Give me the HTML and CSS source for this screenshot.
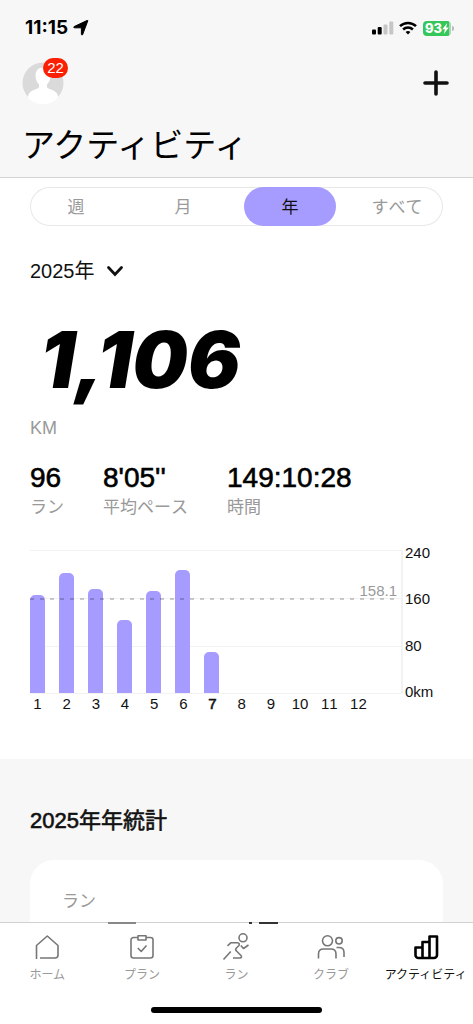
FILE: index.html
```html
<!DOCTYPE html>
<html lang="ja">
<head>
<meta charset="utf-8">
<meta name="viewport" content="width=device-width, initial-scale=1">
<title>アクティビティ</title>
<link rel="stylesheet" href="styles.css">
</head>
<body>
<div class="app">
  <header class="header">
    <div class="status">
      <span class="clock">11:15</span>
      <svg class="locate" width="16" height="16" viewBox="0 0 16 16"><path d="M14.800.800 9.700 14.400c-.3.9-1.300.8-1.300-.1V7.800H1.600C.6 7.800.4 6.900 1.300 6.500L14 .5c.6-.3 1-.1.8.3z" fill="#000" stroke="#000" stroke-width="1"/></svg>
      <svg class="signal" width="22" height="14" viewBox="0 0 22 14"><rect y="8.500" width="4" height="5" rx="1"/><rect x="5.700" y="6" width="4" height="7.500" rx="1"/><rect x="11.500" y="3.500" width="4" height="10" rx="1" fill="#c6c6c6"/><rect x="17.300" y=".5" width="4" height="13" rx="1" fill="#c6c6c6"/></svg>
      <svg class="wifi" width="18" height="14" viewBox="0 0 18 14" fill="none" stroke="#000" stroke-width="2.500"><path d="M1 5.200C5.500.9 12.500.9 17 5.200"/><path d="M4.100 8.500c2.800-2.600 7-2.600 9.800 0"/><path d="M6.600 10.900c1.400-1.200 3.400-1.200 4.800 0L9 13.400z" fill="#000" stroke="none"/></svg>
      <span class="battery"><span class="battery-level">93<svg width="7" height="11" viewBox="0 0 7 11"><path d="M5.200 0 .3 6.200h2.600L1.800 11 6.800 4.600H4.100z" fill="#fff"/></svg></span><span class="battery-cap"></span></span>
    </div>
    <div class="toolbar">
      <button class="profile" aria-label="プロフィール">
        <svg width="42" height="42" viewBox="0 0 42 42"><circle cx="21" cy="21" r="20.500" fill="#dadada"/><path d="M21 5.500c5 0 7.500 3.500 7.500 8.500 0 3.500-1.500 6.500-3.500 8.500v2.500c0 2 7.500 2.500 10 6.500.8 1.500 1 3 1 4.200A20.500 20.500 0 0 1 6 35.700c0-1.500.2-3 1-4.200 2.500-4 10-4.500 10-6.500v-2.500c-2-2-3.500-5-3.500-8.500 0-5 2.500-8.500 7.500-8.500z" fill="#fff"/></svg>
        <span class="badge">22</span>
      </button>
      <button class="add" aria-label="追加"><svg width="28" height="28" viewBox="0 0 28 28"><path d="M13 3v22M2 14h22" stroke="#111" stroke-width="3.600" stroke-linecap="round"/></svg></button>
    </div>
    <h1 class="title">アクティビティ</h1>
  </header>

  <main class="content">
    <section class="summary">
      <div class="periods">
        <button class="period">週</button>
        <button class="period">月</button>
        <button class="period period-active" aria-pressed="true">年</button>
        <button class="period">すべて</button>
      </div>
      <label class="year">
        <select class="year-select" aria-label="年を選択"><option>2025年</option></select>
        <svg width="18" height="14" viewBox="0 0 18 14"><path d="m2.500 3.500 6.500 7 6.500-7" fill="none" stroke="#111" stroke-width="2.800" stroke-linecap="round"/></svg>
      </label>
      <div class="total">1,106</div>
      <div class="unit">KM</div>
      <dl class="stats">
        <div class="stat"><dd class="stat-value">96</dd><dt class="stat-label">ラン</dt></div>
        <div class="stat"><dd class="stat-value">8'05''</dd><dt class="stat-label">平均ペース</dt></div>
        <div class="stat"><dd class="stat-value">149:10:28</dd><dt class="stat-label">時間</dt></div>
      </dl>
      <div class="chart">
        <div class="chart-main">
          <div class="plot">
            <div class="bars">
              <span class="bar" style="height:68.6%"></span>
              <span class="bar" style="height:83.7%"></span>
              <span class="bar" style="height:73%"></span>
              <span class="bar" style="height:51.4%"></span>
              <span class="bar" style="height:71.6%"></span>
              <span class="bar" style="height:86%"></span>
              <span class="bar" style="height:28.6%"></span>
              <span class="bar"></span><span class="bar"></span><span class="bar"></span><span class="bar"></span><span class="bar"></span>
            </div>
            <div class="average"><span class="average-value">158.1</span></div>
          </div>
          <div class="months">
            <span>1</span><span>2</span><span>3</span><span>4</span><span>5</span><span>6</span><span class="month-now">7</span><span>8</span><span>9</span><span>10</span><span>11</span><span>12</span>
          </div>
        </div>
        <div class="scale"><span>240</span><span>160</span><span>80</span><span>0km</span></div>
      </div>
    </section>
    <section class="yearly">
      <h2 class="yearly-title">2025年年統計</h2>
      <div class="card"><span class="card-label">ラン</span></div>
    </section>
  </main>

  <footer class="footer">
    <svg class="peek" width="170" height="2" viewBox="0 0 170 2"><path d="M0 0h28v2H0z" fill="#888"/><path d="M141 0h3v2h-3zM151 0h19v2h-19z" fill="#333"/></svg>
    <nav class="tabs">
      <a class="tab" href="#home"><svg width="28" height="28" viewBox="0 0 28 28"><path d="M3.500 26V12.500L14.300 3 25 12.500V22a3 3 0 0 1-3 3H7"/></svg>ホーム</a>
      <a class="tab" href="#plan"><svg width="28" height="28" viewBox="0 0 28 28"><path d="M10 4.500H5.500a2.500 2.500 0 0 0-2.500 2.500v15.500A2.500 2.500 0 0 0 5.500 25h17a2.500 2.500 0 0 0 2.500-2.500V7a2.500 2.500 0 0 0-2.500-2.500H18M10 2.700h8V7h-8zM9.800 15l3.400 3.500 5.300-6"/></svg>プラン</a>
      <a class="tab" href="#run"><svg width="28" height="28" viewBox="0 0 28 28"><circle cx="21" cy="4.800" r="4"/><path d="M5.500 12.800 9 9.700h6.500c1.800 0 2.300 1.800 1.200 3l-2.500 2.500c-.8.900-.5 2 .3 2.800l4.500 4.500c1 1 .5 2.500-1 2.500h-7M18.800 12.500l2.700 3 5-3.500M1.500 26.500l7.300-8"/></svg>ラン</a>
      <a class="tab" href="#club"><svg width="28" height="28" viewBox="0 0 28 28"><circle cx="10.500" cy="7.800" r="5"/><circle cx="22" cy="7.800" r="3.200"/><path d="M1.500 25.500V21c0-3 2-5 5-5H14c3 0 5 2 5 5v4.500M19.500 14.500h2.500c3.200 0 5 2 5 5V24"/></svg>クラブ</a>
      <a class="tab tab-active" href="#activity" aria-current="page"><svg width="28" height="28" viewBox="0 0 28 28"><path d="M3.500 14.500h7V25H6.500a3 3 0 0 1-3-3zM10.500 9h7v16h-7zM17.500 3.500h7.500V22a3 3 0 0 1-3 3h-4.500z"/></svg>アクティビティ</a>
    </nav>
    <div class="home-indicator"></div>
  </footer>
</div>
</body>
</html>
```
FILE: styles.css
```css
* { box-sizing: border-box; }
body {
  margin: 0;
  background: #fff;
  color: #111;
  font-family: "Liberation Sans", "Noto Sans CJK JP", sans-serif;
  font-kerning: none;
}
button {
  border: 0;
  padding: 0;
  background: none;
  color: inherit;
  font: inherit;
}
.app { display: flex; flex-direction: column; height: 100vh; }

.header {
  flex: none;
  padding: 16px 22px 10px;
  background: #f7f7f7;
  border-bottom: 1px solid #d4d4d4;
}
.status { display: flex; align-items: center; height: 24px; padding-left: 3px; }
.clock { font: 700 19px/24px Inter, sans-serif; color: #000; font-kerning: none; }
.locate { margin-left: 5px; }
.signal { margin-left: auto; }
.wifi { margin: 0 6px 0 5px; }
.battery { display: flex; align-items: center; gap: 1px; margin-right: -3px; }
.battery-level {
  display: flex;
  align-items: center;
  justify-content: center;
  width: 28px;
  height: 15px;
  border-radius: 4px;
  background: linear-gradient(to right, #35c759 26px, #a9d6b4 26px);
  color: #fff;
  font: 800 13px/15px Inter, sans-serif;
}
.battery-cap { width: 2px; height: 5px; border-radius: 0 2px 2px 0; background: #bbb; }
.toolbar { display: flex; justify-content: space-between; align-items: center; margin-top: 22px; }
.profile { position: relative; height: 42px; }
.profile svg, .add svg { display: block; }
.badge {
  position: absolute;
  top: -4px;
  left: 21px;
  width: 25px;
  height: 20px;
  border-radius: 10px;
  background: #fb2004;
  color: #fff;
  font-size: 15px;
  line-height: 20px;
  text-align: center;
}
.add { width: 28px; height: 28px; }
.title {
  margin: 15px 0 0;
  color: #000;
  font: 400 33px/48px "Noto Sans CJK JP", sans-serif;
}

.content { flex: 1; min-height: 0; overflow: hidden; }
.summary { padding: 9px 30px 46px; }
.periods {
  display: flex;
  justify-content: space-between;
  border-radius: 20px;
  box-shadow: inset 0 0 0 1px #e8e8e8;
}
.period {
  width: 92px;
  height: 39px;
  padding-bottom: 2px;
  border-radius: 20px;
  color: #999;
  font-size: 17px;
}
.period-active { background: #a69bff; color: #111; }
.year { display: flex; align-items: center; gap: 11px; margin-top: 30px; }
.year-select {
  appearance: none;
  border: 0;
  padding: 0;
  background: none;
  color: #111;
  font: 20px/30px "Liberation Sans", "Noto Sans CJK JP", sans-serif;
}
.total {
  margin: 24px 0 0 10px;
  color: #000;
  font: italic 900 78px/100px Inter, sans-serif;
}
.unit { margin-top: 8px; color: #999; font-size: 18px; line-height: 20px; }
.stats { display: flex; gap: 39px; margin: 24px 0 0; }
.stat { display: flex; flex-direction: column; }
.stat-value {
  margin: 0;
  color: #000;
  font-size: 28px;
  line-height: 32px;
  -webkit-text-stroke: .6px #000;
}
.stat-label { color: #999; font-size: 17px; line-height: 28px; }

.chart { display: flex; margin-top: 22px; font-size: 15px; line-height: 18px; }
.chart-main { flex: 1; padding-top: 6px; }
.plot {
  position: relative;
  height: 144px;
  border-right: 2px solid #f2f2f2;
  border-bottom: 1px solid #f2f2f2;
  background: repeating-linear-gradient(#f2f2f2 0 1px, transparent 1px 48px);
}
.bars, .months { display: flex; justify-content: space-between; margin-right: 37px; }
.bars { align-items: flex-end; height: 100%; }
.bar { width: 15px; border-radius: 5px 5px 0 0; background: #a69bff; }
.average {
  position: absolute;
  top: 48px;
  left: 0;
  right: 4px;
  height: 2px;
  background: repeating-linear-gradient(to right, rgba(0, 0, 0, .2) 0 4px, transparent 4px 10px);
}
.average-value { position: absolute; right: 0; bottom: 0; color: #999; }
.months { margin-top: 1px; }
.months span { display: flex; justify-content: center; width: 15px; }
.month-now { -webkit-text-stroke: .6px #111; }
.scale {
  display: flex;
  flex-direction: column;
  justify-content: space-between;
  width: 40px;
  height: 157px;
  padding-left: 2px;
}

.yearly { padding: 45px 30px 0; background: #f7f7f7; }
.yearly-title {
  margin: 0;
  font-size: 22px;
  font-weight: 400;
  line-height: 34px;
  -webkit-text-stroke: .6px #111;
}
.card { height: 200px; margin-top: 22px; padding: 28px 32px; border-radius: 24px; background: #fff; }
.card-label { color: #999; font-size: 17px; line-height: 28px; }

.footer { position: relative; flex: none; border-top: 1px solid #d0d0d0; background: #fff; }
.peek { position: absolute; top: -1px; left: 108px; }
.tabs { display: flex; }
.tab {
  display: flex;
  flex: 1;
  flex-direction: column;
  align-items: center;
  gap: 4px;
  padding-top: 10px;
  color: #999;
  font: 12px/18px "Noto Sans CJK JP", sans-serif;
  text-decoration: none;
  white-space: nowrap;
}
.tab svg { fill: none; stroke: #777; stroke-width: 1.6; stroke-linejoin: round; overflow: visible; }
.tab-active { color: #111; }
.tab-active svg { stroke: #000; stroke-width: 2.6; }
.home-indicator {
  width: 36%;
  height: 6px;
  margin: 24px auto 11px;
  border-radius: 3px;
  background: #000;
}
```
